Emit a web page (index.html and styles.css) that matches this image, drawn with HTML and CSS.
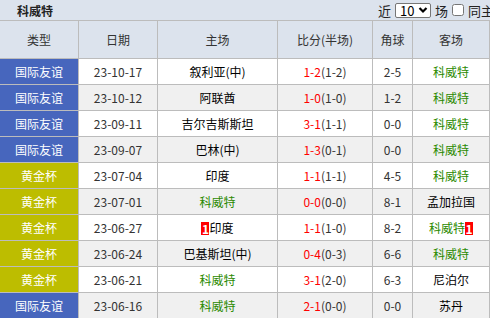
FILE: index.html
```html
<!DOCTYPE html>
<html lang="zh">
<head>
<meta charset="utf-8">
<link rel="stylesheet" href="styles.css">
</head>
<body>
<div class="bar">
  <div class="title">科威特</div>
  <div class="opts">
    <span>近</span>
    <span class="sel">10<svg class="chev" width="10" height="8" viewBox="0 0 10 8"><path d="M1.5 2 L5 5.5 L8.5 2" fill="none" stroke="#000" stroke-width="2.2"/></svg></span>
    <span>场</span>
    <input type="checkbox" class="chk">
    <span>同主场</span>
  </div>
</div>
<table class="grid">
  <colgroup>
    <col class="c-type"><col class="c-date"><col class="c-home"><col class="c-score"><col class="c-corner"><col class="c-away">
  </colgroup>
  <thead>
    <tr><th>类型</th><th>日期</th><th>主场</th><th>比分(半场)</th><th>角球</th><th>客场</th></tr>
  </thead>
  <tbody>
    <tr class="odd"><td class="lg blue">国际友谊</td><td>23-10-17</td><td class="team">叙利亚(中)</td><td><span class="red">1-2</span>(1-2)</td><td>2-5</td><td class="team green">科威特</td></tr>
    <tr class="even"><td class="lg blue">国际友谊</td><td>23-10-12</td><td class="team">阿联酋</td><td><span class="red">1-0</span>(1-0)</td><td>1-2</td><td class="team green">科威特</td></tr>
    <tr class="odd"><td class="lg blue">国际友谊</td><td>23-09-11</td><td class="team">吉尔吉斯斯坦</td><td><span class="red">3-1</span>(1-1)</td><td>0-0</td><td class="team green">科威特</td></tr>
    <tr class="even"><td class="lg blue">国际友谊</td><td>23-09-07</td><td class="team">巴林(中)</td><td><span class="red">1-3</span>(0-1)</td><td>0-0</td><td class="team green">科威特</td></tr>
    <tr class="odd"><td class="lg gold">黄金杯</td><td>23-07-04</td><td class="team">印度</td><td><span class="red">1-1</span>(1-1)</td><td>4-5</td><td class="team green">科威特</td></tr>
    <tr class="even"><td class="lg gold">黄金杯</td><td>23-07-01</td><td class="team green">科威特</td><td><span class="red">0-0</span>(0-0)</td><td>8-1</td><td class="team">孟加拉国</td></tr>
    <tr class="odd"><td class="lg gold">黄金杯</td><td>23-06-27</td><td class="team"><span class="card">1</span>印度</td><td><span class="red">1-1</span>(1-0)</td><td>8-2</td><td class="team green">科威特<span class="card">1</span></td></tr>
    <tr class="even"><td class="lg gold">黄金杯</td><td>23-06-24</td><td class="team">巴基斯坦(中)</td><td><span class="red">0-4</span>(0-3)</td><td>6-6</td><td class="team green">科威特</td></tr>
    <tr class="odd"><td class="lg gold">黄金杯</td><td>23-06-21</td><td class="team green">科威特</td><td><span class="red">3-1</span>(2-0)</td><td>6-3</td><td class="team">尼泊尔</td></tr>
    <tr class="even"><td class="lg blue">国际友谊</td><td>23-06-16</td><td class="team green">科威特</td><td><span class="red">2-1</span>(0-0)</td><td>0-0</td><td class="team">苏丹</td></tr>
  </tbody>
</table>
</body>
</html>
```
FILE: styles.css
```css
html, body {
  margin: 0;
  padding: 0;
  overflow: hidden;
  background: #ffffff;
}
body {
  font-family: "Noto Sans CJK SC", "Noto Sans", sans-serif;
  font-size: 12px;
  color: #333333;
}
.bar {
  display: flex;
  align-items: center;
  height: 20px;
  background: #dce3ed;
  white-space: nowrap;
  overflow: hidden;
}
.title {
  flex: 0 0 378px;
  box-sizing: border-box;
  padding-left: 17px;
  font-weight: bold;
  font-size: 12px;
  color: #222;
}
.opts {
  flex: 0 0 auto;
  display: flex;
  align-items: center;
  gap: 4px;
  font-size: 13px;
  color: #222;
}
.sel {
  display: inline-flex;
  align-items: center;
  justify-content: space-between;
  box-sizing: border-box;
  width: 36px;
  height: 15px;
  padding: 0 2px 0 4px;
  background: #fff;
  border: 1px solid #767676;
  border-radius: 2px;
  font-size: 13px;
  line-height: 13px;
  color: #000;
}
.chev { display: block; }
.chk {
  margin: 0;
  width: 12px;
  height: 12px;
}
.grid {
  width: 490px;
  table-layout: fixed;
  border-collapse: separate;
  border-spacing: 0;
}
.c-type { width: 79px; }
.c-date { width: 79px; }
.c-home { width: 120px; }
.c-score { width: 95px; }
.c-corner { width: 40px; }
.c-away { width: 77px; }
.grid th, .grid td {
  box-sizing: border-box;
  padding: 0;
  text-align: center;
  white-space: nowrap;
  overflow: hidden;
  border-right: 1px solid #bcbcbc;
  border-bottom: 1px solid #bcbcbc;
}
.grid th {
  height: 39px;
  border-top: 1px solid #bcbcbc;
  background: #dce3ed;
  font-weight: normal;
  color: #333;
}
.grid td {
  height: 26px;
  color: #333;
}
.odd td { background: #ffffff; }
.even td { background: #f0f0f0; }
.grid td.blue { background: #4766bd; color: #fff; }
.grid td.gold { background: #bdbd00; color: #fff; }
.grid td.team { color: #000; }
.grid td.green { color: #2b8a00; }
.red { color: #ff0000; }
.card {
  display: inline-block;
  width: 8px;
  height: 13px;
  line-height: 13px;
  background: #ff0000;
  color: #fff;
  font-weight: bold;
  font-size: 12px;
  text-align: center;
  vertical-align: middle;
  margin-top: -2px;
}
```
